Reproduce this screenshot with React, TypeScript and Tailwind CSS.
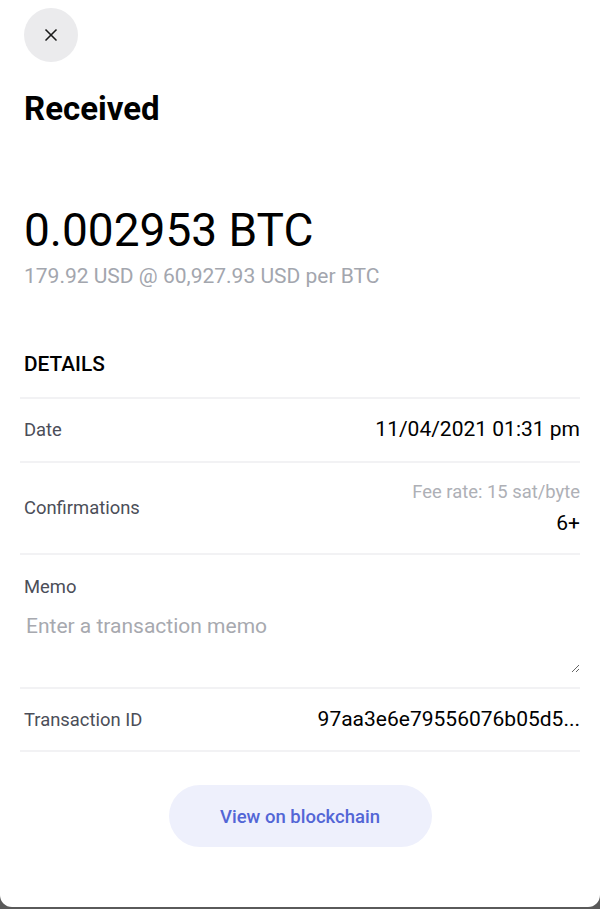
import { X } from 'lucide-react'

export default function App() {
  return (
    <div className="min-h-[909px] bg-[#5a5a5a]" style={{ fontFamily: 'Roboto, "Liberation Sans", sans-serif' }}>
      <div className="h-[907px] bg-white rounded-b-[12px] px-5 pt-2">
        <button className="ml-1 w-[54px] h-[54px] rounded-full bg-[#ebebed] flex items-center justify-center">
          <X className="w-5 h-5 text-[#1a1a1a]" strokeWidth={2} />
        </button>

        <h1 className="ml-1 mt-[27px] text-[33px] leading-[40px] font-bold text-black">Received</h1>

        <div className="ml-1 mt-[75px]">
          <div className="text-[46px] leading-[52px] text-black">0.002953 BTC</div>
          <div className="mt-[7px] text-[21px] leading-[26px] text-[#a3a6ae]">179.92 USD @ 60,927.93 USD per BTC</div>
        </div>

        <h2 className="ml-1 mt-[62px] text-[20.8px] leading-[26px] font-medium text-black">DETAILS</h2>

        <div className="mt-[20px] border-t-2 border-[#f2f2f4]">
          <div className="h-[64px] flex items-center justify-between pl-1 border-b-2 border-[#f2f2f4]">
            <span className="text-[18.4px] text-[#4b4e58]">Date</span>
            <span className="text-[21px] text-black">11/04/2021 01:31 pm</span>
          </div>

          <div className="h-[92px] flex items-center justify-between pl-1 border-b-2 border-[#f2f2f4]">
            <span className="text-[18.4px] text-[#4b4e58]">Confirmations</span>
            <div className="flex flex-col items-end gap-[7px] -mt-[1px]">
              <span className="text-[18.4px] leading-[24px] text-[#aeb0b6]">Fee rate: 15 sat/byte</span>
              <span className="text-[21px] leading-[24px] text-black">6+</span>
            </div>
          </div>

          <div className="h-[134px] pl-1 pt-[20px] border-b-2 border-[#f2f2f4] flex flex-col">
            <span className="text-[18.4px] leading-[24px] text-[#4b4e58]">Memo</span>
            <textarea
              placeholder="Enter a transaction memo"
              className="mt-[13px] flex-1 mb-[14px] w-full resize-y bg-transparent outline-none text-[21px] leading-[28px] text-black placeholder:text-[#a7a9af] pl-[2px]"
            />
          </div>

          <div className="h-[63px] flex items-center justify-between pl-1 border-b-2 border-[#f2f2f4]">
            <span className="text-[18.4px] text-[#4b4e58]">Transaction ID</span>
            <span className="text-[21px] text-black">97aa3e6e79556076b05d5...</span>
          </div>
        </div>

        <div className="mt-[33px] flex justify-center">
          <button className="w-[263px] h-[62px] rounded-full bg-[#eef0fc] text-[18.5px] font-medium text-[#5366d6] pt-[3px]">
            View on blockchain
          </button>
        </div>
      </div>
    </div>
  )
}
